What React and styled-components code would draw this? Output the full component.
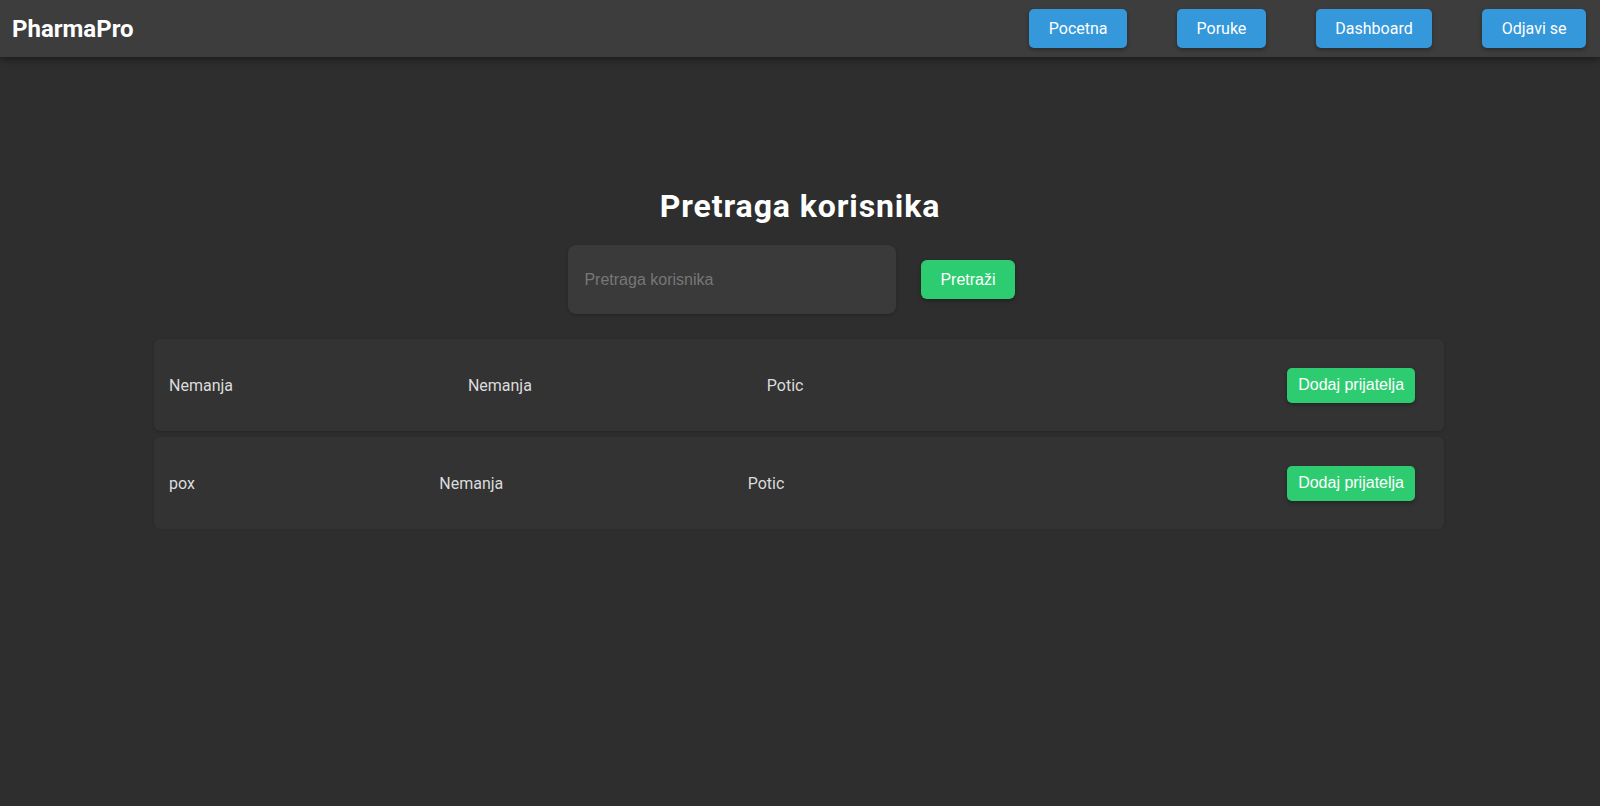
import React from "react";
import styled, { createGlobalStyle } from "styled-components";

const GlobalStyle = createGlobalStyle`
  html, body {
    margin: 0;
    padding: 0;
    background: #2e2e2e;
    font-family: Roboto, "Liberation Sans", Arial, sans-serif;
    color: #e0e0e0;
  }
  * { box-sizing: border-box; }
`;

const Header = styled.header`
  height: 57px;
  background: #3d3d3d;
  display: flex;
  align-items: center;
  justify-content: space-between;
  padding: 0 14px 0 12px;
  box-shadow: 0 2px 8px rgba(0, 0, 0, 0.45);
  position: relative;
  z-index: 1;
`;

const Logo = styled.div`
  font-family: Roboto, sans-serif;
  font-weight: 700;
  font-size: 24px;
  color: #ffffff;
`;

const Nav = styled.nav`
  display: flex;
  align-items: center;
  gap: 50px;
`;

const NavButton = styled.button`
  font-family: Roboto, sans-serif;
  font-size: 16px;
  font-weight: 400;
  color: #ffffff;
  background: #3498db;
  border: none;
  border-radius: 5px;
  padding: 0 19.5px;
  height: 39px;
  box-shadow: 0 2px 4px rgba(0, 0, 0, 0.3);
  cursor: pointer;
`;

const Main = styled.main`
  padding-top: 130px;
  display: flex;
  flex-direction: column;
  align-items: center;
`;

const Title = styled.h1`
  margin: 0 0 20px;
  font-family: Roboto, sans-serif;
  font-weight: 700;
  font-size: 32px;
  color: #ffffff;
  letter-spacing: 0.9px;
`;

const SearchBar = styled.div`
  display: flex;
  align-items: center;
  gap: 25px;
  margin-bottom: 25px;
  margin-right: 17px;
`;

const SearchInput = styled.input`
  width: 328px;
  height: 69px;
  padding: 0 16px;
  background: #3a3a3a;
  border: none;
  border-radius: 8px;
  color: #e0e0e0;
  font-family: "Liberation Sans", Arial, sans-serif;
  font-size: 16px;
  outline: none;
  box-shadow: 0 1px 3px rgba(0, 0, 0, 0.25);
  &::placeholder {
    color: #777777;
  }
`;

const GreenButton = styled.button`
  font-family: "Liberation Sans", Arial, sans-serif;
  font-size: 16px;
  color: #ffffff;
  background: #2ecc71;
  border: none;
  border-radius: ${(p) => (p.$small ? "5px" : "6px")};
  padding: ${(p) => (p.$small ? "0 11px" : "0 19px")};
  height: ${(p) => (p.$small ? "35px" : "39px")};
  box-shadow: 0 2px 4px rgba(0, 0, 0, 0.3);
  cursor: pointer;
  white-space: nowrap;
`;

const List = styled.div`
  width: 1290px;
  margin-right: 2px;
  display: flex;
  flex-direction: column;
  gap: 6px;
`;

const Row = styled.div`
  height: 92px;
  display: flex;
  align-items: center;
  padding: 0 15px;
  background: #333333;
  border-radius: 6px;
  box-shadow: 0 1px 3px rgba(0, 0, 0, 0.18);
`;

const Cell = styled.span`
  flex: 1 1 auto;
  font-family: Roboto, sans-serif;
  font-size: 16px;
  color: #dcdcdc;
  white-space: nowrap;
`;

const ActionCell = styled.div`
  flex: 1 1 auto;
  display: flex;
  justify-content: flex-end;
  padding: 0 14px 0 14px;
`;

const users = [
  { username: "Nemanja", first: "Nemanja", last: "Potic" },
  { username: "pox", first: "Nemanja", last: "Potic" },
];

export default function App() {
  return (
    <>
      <GlobalStyle />
      <Header>
        <Logo>PharmaPro</Logo>
        <Nav>
          <NavButton>Pocetna</NavButton>
          <NavButton>Poruke</NavButton>
          <NavButton>Dashboard</NavButton>
          <NavButton>Odjavi se</NavButton>
        </Nav>
      </Header>
      <Main>
        <Title>Pretraga korisnika</Title>
        <SearchBar>
          <SearchInput placeholder="Pretraga korisnika" />
          <GreenButton>Pretraži</GreenButton>
        </SearchBar>
        <List>
          {users.map((u, i) => (
            <Row key={i}>
              <Cell>{u.username}</Cell>
              <Cell>{u.first}</Cell>
              <Cell>{u.last}</Cell>
              <ActionCell>
                <GreenButton $small>Dodaj prijatelja</GreenButton>
              </ActionCell>
            </Row>
          ))}
        </List>
      </Main>
    </>
  );
}
